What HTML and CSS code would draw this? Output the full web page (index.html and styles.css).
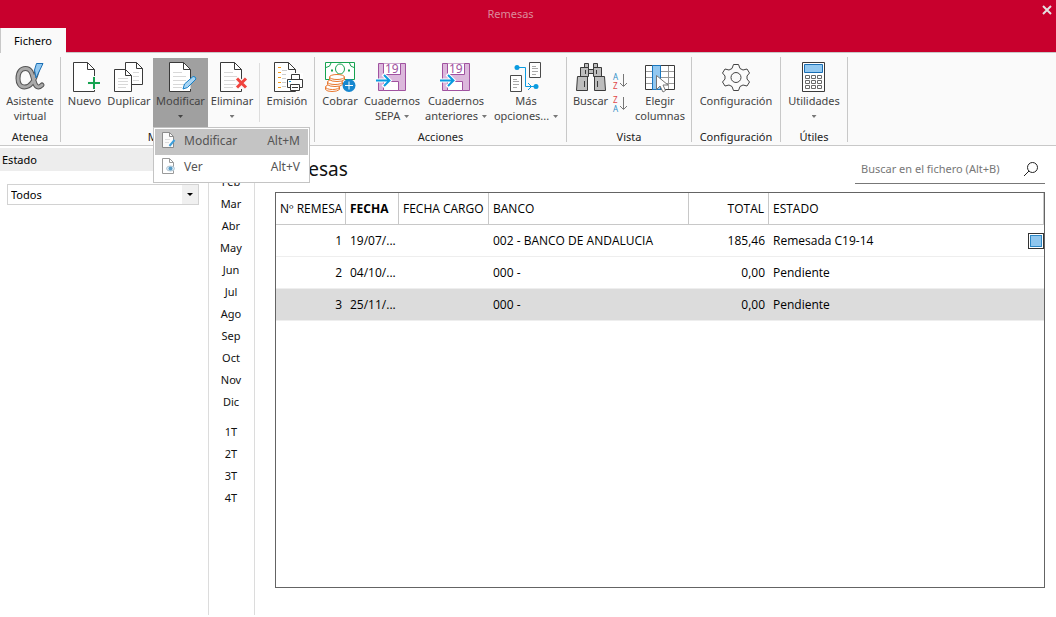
FILE: index.html
```html
<!DOCTYPE html>
<html lang="es">
<head>
<meta charset="utf-8">
<title>Remesas</title>
<link rel="stylesheet" href="styles.css">
</head>
<body>
<svg class="defs" aria-hidden="true">
  <defs>
    <g id="page">
      <path d="M4.500 1.500H18.500L25.500 8.500V30.500H4.500Z" fill="#fff"/>
      <path d="M25.500 21V8.500L18.500 1.500H4.500V30.500H25.500V28" fill="none" stroke="#3a3a3a"/>
      <path d="M18.500 1.500V8.500H25.500" fill="none" stroke="#3a3a3a"/>
    </g>
    <g id="lines"><path d="M8 11.500H17M8 15.500H21M8 19.500H21M8 23.500H21M8 26.500H17" stroke="#d8d8d8"/></g>
    <g id="book">
      <path d="M2.500 2.500H29.500V29.500H2.500Z" fill="#dcb8dc" stroke="#a052a0"/>
      <path d="M7.500 2.500V13.500H24.500V2.500" fill="#fff" stroke="#a052a0"/>
      <text x="9" y="12" font-size="12" class="glyph" fill="#a052a0">19</text>
      <path d="M7.500 20.500H22.500V29.500H7.500Z" fill="#fff" stroke="#a052a0"/>
      <path d="M0 19.500H14M7 13L13.500 19.500L7 26" fill="none" stroke="#fff" stroke-width="4"/>
      <path d="M0 19.500H13M8 14L13.500 19.500L8 25" fill="none" stroke="#0a9be0" stroke-width="2"/>
    </g>
  </defs>
</svg>
<div class="app">
  <header class="titlebar">
    <h1 class="window-title">Remesas</h1>
    <button class="close" aria-label="Cerrar"><svg width="10" height="10" viewBox="0 0 10 10"><path d="M1 1L9 9M9 1L1 9" stroke="#e4e0e2" stroke-width="2"/></svg></button>
    <button class="tab">Fichero</button>
  </header>

  <div class="ribbon">
    <section class="group g-atenea">
      <div class="tools">
        <button class="tool w-58">
          <svg width="32" height="32" viewBox="0 0 32 32"><g fill="none" stroke-linecap="round"><path d="M23 10C21 18 17.500 26 10.500 26C6 26 4 22 4 17.500C4 11 7 7.500 11.500 7.500C18 7.500 18.500 15 20 20C21.500 25.500 24 28 28 24" stroke="#555" stroke-width="5"/><path d="M23 10C21 18 17.500 26 10.500 26C6 26 4 22 4 17.500C4 11 7 7.500 11.500 7.500C18 7.500 18.500 15 20 20C21.500 25.500 24 28 28 24" stroke="#aaa" stroke-width="3"/></g><path d="M22.500 2.500H29L22 17L20.500 9Z" fill="#92c8f0" stroke="#1a6fb5"/></svg>
          <span>Asistente<br>virtual</span>
        </button>
      </div>
      <h2>Atenea</h2>
    </section>

    <section class="group g-mant">
      <div class="tools">
        <button class="tool w-43">
          <svg width="32" height="32" viewBox="0 0 32 32"><use href="#page"/><path d="M25.500 15V29M18.500 22H32" stroke="#fafafa" stroke-width="4"/><path d="M25 16V28M19 22H31" stroke="#16a350" stroke-width="2"/></svg>
          <span>Nuevo</span>
        </button>
        <button class="tool w-46">
          <svg width="32" height="32" viewBox="0 0 32 32"><path d="M12.500 1.500H23.500L29.500 7.500V23.500H12.500Z" fill="#fff" stroke="#3a3a3a"/><path d="M23.500 1.500V7.500H29.500" fill="none" stroke="#3a3a3a"/><path d="M20 11.500H26M20 15.500H26M20 19.500H26" stroke="#d8d8d8"/><path d="M1.500 8.500H12.500L18.500 14.500V30.500H1.500Z" fill="#fff" stroke="#3a3a3a"/><path d="M12.500 8.500V14.500H18.500" fill="none" stroke="#3a3a3a"/><path d="M5 17.500H15M5 20.500H15M5 23.500H15M5 26.500H13" stroke="#d8d8d8"/></svg>
          <span>Duplicar</span>
        </button>
        <div class="dropdown">
          <button class="tool w-55 active" aria-haspopup="menu" aria-expanded="true">
            <svg width="32" height="32" viewBox="0 0 32 32"><use href="#page"/><use href="#lines"/><path d="M18 28L19.500 23L28 15.500Q30.500 15 31 18L22.500 26.500Z" fill="#a8d4f3" stroke="#1580c8"/></svg>
            <span>Modificar</span><i class="caret"></i>
          </button>
          <div class="menu" role="menu">
            <button class="item selected" role="menuitem">
              <svg width="16" height="16" viewBox="0 0 16 16"><path d="M1.500.500H8.500L12.500 4.500V15.500H1.500Z" fill="#fafafa" stroke="#8b8b8b"/><path d="M8.500.500V4.500H12.500" fill="none" stroke="#8b8b8b"/><path d="M4 7.500H9M4 10.500H8" stroke="#ddd"/><path d="M8.500 14L13.500 8" stroke="#3c9fdb" stroke-width="2"/></svg>
              <span>Modificar</span><kbd>Alt+M</kbd>
            </button>
            <button class="item" role="menuitem">
              <svg width="16" height="16" viewBox="0 0 16 16"><path d="M1.500.500H8.500L12.500 4.500V15.500H1.500Z" fill="#fff" stroke="#9a9a9a"/><path d="M8.500.500V4.500H12.500" fill="none" stroke="#9a9a9a"/><ellipse cx="9.500" cy="10.500" rx="4" ry="2.500" fill="#dcebf5" stroke="#b4c6d2"/><circle cx="9.500" cy="10.500" r="2" fill="#5a9dc8"/></svg>
              <span>Ver</span><kbd>Alt+V</kbd>
            </button>
          </div>
        </div>
        <button class="tool w-48">
          <svg width="32" height="32" viewBox="0 0 32 32"><use href="#page"/><use href="#lines"/><path d="M20 17L30 27M30 17L20 27" stroke="#fafafa" stroke-width="5"/><path d="M21 17.500L30 26.500M30 17.500L21 26.500" stroke="#f0443e" stroke-width="3"/></svg>
          <span>Eliminar</span><i class="caret"></i>
        </button>
        <div class="divider"></div>
        <button class="tool w-50">
          <svg width="32" height="32" viewBox="0 0 32 32"><path d="M3.500 1.500H17.500L24.500 8.500V30.500H3.500Z" fill="#fff" stroke="#3a3a3a"/><path d="M17.500 1.500V8.500H24.500" fill="none" stroke="#3a3a3a"/><path d="M11 9.500H16M11 13.500H18M11 17.500H16M11 21.500H15M11 25.500H15" stroke="#ccc"/><path d="M7 6.500H10M7 11.500H10M7 16.500H10M7 21.500H10M7 26.500H10" stroke="#f39a1c"/><path d="M15 12H32V30H15Z" fill="#fff"/><path d="M20.500 18V13.500H28.500V18M19 26.500H16.500V18.500H31.500V26.500H29M19.500 23.500H28.500V29.500H19.500ZM21 26.500H27" fill="none" stroke="#3a3a3a"/><path d="M18 20.500H20" stroke="#0a9be0"/></svg>
          <span>Emisión</span>
        </button>
      </div>
      <h2>Mantenimiento</h2>
    </section>

    <section class="group g-acc">
      <div class="tools">
        <button class="tool w-46">
          <svg width="32" height="32" viewBox="0 0 32 32"><path d="M1.500 1.500H30.500V18.500H1.500Z" fill="#fff" stroke="#16a350"/><path d="M2 6.500Q6.500 6 7 2M25.500 2Q26 6 30 6.500" fill="none" stroke="#16a350"/><ellipse cx="16" cy="8" rx="4.500" ry="5" fill="none" stroke="#16a350"/><path d="M7 9.500H9M24 9.500H26" stroke="#16a350" stroke-width="2"/><g fill="#fff" stroke="#e8762d"><path d="M1.500 26V28.500Q3 30.500 8 30.500T15.500 28.500V26"/><ellipse cx="8.500" cy="26" rx="7" ry="2.500"/><path d="M3.500 21V23.500Q5 25.500 11 25.500T18.500 23.500V21"/><ellipse cx="11" cy="21" rx="7.500" ry="2.500"/><path d="M5.500 16V18.500Q7 20.500 13 20.500T20.500 18.500V16"/><ellipse cx="13" cy="16" rx="7.500" ry="2.500"/></g><circle cx="25" cy="24.500" r="6.500" fill="#1787cf"/><path d="M25 20.500V28.500M21 24.500H29" stroke="#fff"/></svg>
          <span>Cobrar</span>
        </button>
        <button class="tool w-58"><svg width="32" height="32" viewBox="0 0 32 32"><use href="#book"/></svg><span>Cuadernos<br>SEPA <i class="caret inline"></i></span></button>
        <button class="tool w-70"><svg width="32" height="32" viewBox="0 0 32 32"><use href="#book"/></svg><span>Cuadernos<br>anteriores <i class="caret inline"></i></span></button>
        <button class="tool w-70">
          <svg width="32" height="32" viewBox="0 0 32 32"><g fill="#fff" stroke="#4a4a4a"><path d="M19.500 1.500H30.500V16.500H19.500ZM.500 14.500H11.500V30.500H.500Z"/></g><path d="M22 5.500H26M22 7.500H28M22 10.500H28M22 13.500H26M3 18.500H7M3 20.500H9M3 23.500H9M3 26.500H7" stroke="#aaa"/><circle cx="7" cy="6.500" r="2.500" fill="#0a9be0"/><circle cx="26" cy="25.500" r="2.500" fill="#0a9be0"/><path d="M7 6.500H15.500V25.500H25M18 22L21.500 25.500L18 29" fill="none" stroke="#0a9be0"/></svg>
          <span>Más<br>opciones... <i class="caret inline"></i></span>
        </button>
      </div>
      <h2>Acciones</h2>
    </section>

    <section class="group g-vista">
      <div class="tools">
        <button class="tool w-43">
          <svg width="32" height="32" viewBox="0 0 32 32"><g fill="#bdbdbd" stroke="#3a3a3a"><path d="M9.500 2.500H13.500V6.500H9.500ZM18.500 2.500H22.500V6.500H18.500ZM5.500 6.500H13.500V15.500H5.500ZM18.500 6.500H26.500V15.500H18.500ZM2.500 15.500H12.500V29.500H1.500ZM19.500 15.500H29.500L30.500 29.500H19.500ZM13.500 8.500H18.500V12.500H13.500Z"/><path d="M9.500 20V26M22.500 20V26M10.500 9V13M21.500 9V13"/></g></svg>
          <span>Buscar</span>
        </button>
        <div class="sorts">
          <button class="sort" aria-label="Orden ascendente"><svg width="16" height="20" viewBox="0 0 16 20"><text x="1" y="9" font-size="8" class="glyph" fill="#2f8fc8">A</text><text x="1" y="18" font-size="8" class="glyph" fill="#e04848">Z</text><path d="M11.500 3V15M8 12L11.500 15.500L15 12" fill="none" stroke="#777"/></svg></button>
          <button class="sort" aria-label="Orden descendente"><svg width="16" height="20" viewBox="0 0 16 20"><text x="1" y="9" font-size="8" class="glyph" fill="#e04848">Z</text><text x="1" y="18" font-size="8" class="glyph" fill="#2f8fc8">A</text><path d="M11.500 3V15M8 12L11.500 15.500L15 12" fill="none" stroke="#777"/></svg></button>
        </div>
        <button class="tool w-58">
          <svg width="32" height="32" viewBox="0 0 32 32"><path d="M1.500 4.500H30.500V28.500H1.500Z" fill="#fff" stroke="#3a3a3a"/><path d="M2 10.500H30M2 16.500H30M2 22.500H30M24.500 5V28" stroke="#999"/><path d="M8.500 4.500H16.500V28.500H8.500Z" fill="#92c8f0" stroke="#1a78c0"/><path d="M12.500 14.500V28.500L16 25L19 31L21.500 29.500L19 24H24Z" fill="#fff" stroke="#777"/></svg>
          <span>Elegir<br>columnas</span>
        </button>
      </div>
      <h2>Vista</h2>
    </section>

    <section class="group g-conf">
      <div class="tools">
        <button class="tool w-82">
          <svg width="32" height="32" viewBox="0 0 32 32"><path d="M13.500 3.500H18.500L20 7.500L23 9L27 8L29.500 12L27 15V18L29.500 21L27 25L23 24L20 25.500L18.500 29.500H13.500L12 25.500L9 24L5 25L2.500 21L5 18V15L2.500 12L5 8L9 9L12 7.500Z" fill="none" stroke="#444" stroke-linejoin="round"/><circle cx="16" cy="16.500" r="5" fill="none" stroke="#444"/></svg>
          <span>Configuración</span>
        </button>
      </div>
      <h2>Configuración</h2>
    </section>

    <section class="group g-util">
      <div class="tools">
        <button class="tool w-58">
          <svg width="32" height="32" viewBox="0 0 32 32"><path d="M4.500 1.500H26.500V30.500H4.500Z" fill="#fff" stroke="#3a3a3a"/><path d="M6.500 3.500H24.500V11.500H6.500Z" fill="#92c8f0" stroke="#1a6fb5"/><path d="M7.500 14.500H11.500V17.500H7.500ZM13.500 14.500H17.500V17.500H13.500ZM19.500 14.500H23.500V17.500H19.500ZM7.500 19.500H11.500V22.500H7.500ZM13.500 19.500H17.500V22.500H13.500ZM19.500 19.500H23.500V22.500H19.500ZM7.500 24.500H11.500V27.500H7.500ZM13.500 24.500H17.500V27.500H13.500ZM19.500 24.500H23.500V27.500H19.500Z" fill="none" stroke="#6a6a6a"/></svg>
          <span>Utilidades</span><i class="caret"></i>
        </button>
      </div>
      <h2>Útiles</h2>
    </section>
  </div>

  <div class="workspace">
    <aside class="filters">
      <label class="filter-title" for="estado">Estado</label>
      <div class="select-box">
        <select id="estado"><option>Todos</option></select>
        <span class="select-arrow"><i class="caret dark"></i></span>
      </div>
    </aside>
    <nav class="months" aria-label="Periodo">
      <button>Ene</button><button>Feb</button><button>Mar</button><button>Abr</button><button>May</button><button>Jun</button><button>Jul</button><button>Ago</button><button>Sep</button><button>Oct</button><button>Nov</button><button>Dic</button>
      <button class="quarter">1T</button><button>2T</button><button>3T</button><button>4T</button>
    </nav>
    <main class="main">
      <div class="main-head">
        <h2 class="title">Remesas</h2>
        <div class="search">
          <input type="text" aria-label="Buscar en el fichero" placeholder="Buscar en el fichero (Alt+B)">
          <button aria-label="Buscar"><svg width="16" height="16" viewBox="0 0 16 16"><circle cx="9.500" cy="6.500" r="5" fill="none" stroke="#222"/><path d="M6 10L1 15" stroke="#222"/></svg></button>
        </div>
      </div>
      <div class="grid">
        <table>
          <colgroup><col class="c-num"><col class="c-date"><col class="c-charge"><col class="c-bank"><col class="c-total"><col></colgroup>
          <thead><tr><th class="num">Nº REMESA</th><th class="sorted">FECHA</th><th>FECHA CARGO</th><th>BANCO</th><th class="num">TOTAL</th><th>ESTADO</th></tr></thead>
          <tbody>
            <tr><td class="num">1</td><td>19/07/...</td><td></td><td>002 - BANCO DE ANDALUCIA</td><td class="num">185,46</td><td><div class="state">Remesada C19-14<span class="mark"></span></div></td></tr>
            <tr><td class="num">2</td><td>04/10/...</td><td></td><td>000 -</td><td class="num">0,00</td><td>Pendiente</td></tr>
            <tr class="current"><td class="num">3</td><td>25/11/...</td><td></td><td>000 -</td><td class="num">0,00</td><td>Pendiente</td></tr>
          </tbody>
        </table>
      </div>
    </main>
  </div>
</div>
</body>
</html>
```
FILE: styles.css
```css
* { box-sizing: border-box; }
body { margin: 0; background: #fff; color: #111; font: 11px/15px "Noto Sans", "Open Sans", sans-serif; }
button, input, select { font: inherit; color: inherit; border: 0; border-radius: 0; background: none; padding: 0; margin: 0; }
h1, h2 { margin: 0; font-weight: 400; font-size: 11px; }
.defs { position: absolute; width: 0; height: 0; }
.app { display: flex; flex-direction: column; min-height: 100vh; padding-bottom: 2px; }

.titlebar { display: grid; grid-template-columns: 66px 1fr 66px; grid-template-rows: 28px 24px; background: #c8002d; }
.window-title { grid-column: 2; text-align: center; line-height: 28px; color: #dc8b9b; padding-right: 35px; }
.close { grid-column: 3; justify-self: end; align-self: start; display: flex; padding: 5px 4px; }
.tab { grid-column: 1; grid-row: 2; background: #fafafa; border-left: 1px solid #c8c8c8; color: #000; margin-bottom: -1px; padding-right: 1px; z-index: 1; }

.ribbon { display: flex; background: #fafafa; border-top: 1px solid #c8c8c8; border-bottom: 1px solid #c8c8c8; padding: 4px 0 3px; color: #444; }
.group { display: flex; flex-direction: column; border-right: 1px solid #c8c8c8; height: 85px; }
.group h2 { text-align: center; line-height: 15px; margin-top: 2px; color: #222; }
.tools { display: flex; padding: 1px 0 0 2px; }
.g-atenea { width: 61px; }
.g-atenea .tools { padding-left: 1px; }
.g-mant { width: 254px; }
.g-acc { width: 252px; }
.g-vista { width: 125px; }
.g-conf { width: 89px; }
.g-conf .tools { padding-left: 3px; }
.g-util { width: 67px; }
.g-util .tools { padding-left: 4px; }
.tool { display: flex; flex-direction: column; align-items: center; height: 69px; padding-top: 3px; white-space: nowrap; }
.tool svg { flex: none; }
.w-43 { width: 43px; }
.w-46 { width: 46px; }
.w-48 { width: 48px; }
.w-50 { width: 50px; }
.w-55 { width: 55px; }
.w-58 { width: 58px; }
.w-70 { width: 70px; }
.w-82 { width: 82px; }
.active { background: #a0a0a0; }
.caret { display: block; width: 5px; height: 3px; margin-top: 7px; background: #777; clip-path: polygon(0 0, 100% 0, 50% 100%); }
.active .caret { background: #444; }
.caret.inline { display: inline-block; margin: 0 0 2px 1px; }
.caret.dark { width: 6px; height: 3px; margin: 0; background: #000; }
.divider { width: 1px; height: 59px; margin: 5px 2px 0 3px; background: #ddd; }
.glyph { font-family: "Noto Sans", sans-serif; }
.sorts { display: flex; flex-direction: column; gap: 3px; padding-top: 13px; }
.sort { display: flex; }
.sorts + .tool { margin-left: 3px; }

.dropdown { position: relative; margin-left: 1px; }
.menu { position: absolute; left: 0; top: 69px; width: 157px; padding: 1px; background: #fff; border: 1px solid #c4c4c4; z-index: 5; font-size: 12px; }
.item { display: flex; align-items: center; width: 100%; height: 26px; padding: 0 8px 4px 6px; gap: 7px; color: #555; }
.item.selected { background: #c4c4c4; }
.item kbd { font: inherit; margin-left: auto; }

.workspace { display: flex; flex: 1; }
.filters { flex: none; width: 209px; border-right: 1px solid #dcdcdc; padding-top: 2px; color: #000; }
.filter-title { display: block; background: #ededed; line-height: 23px; padding-left: 2px; }
.select-box { display: flex; margin: 13px 9px 0 7px; border: 1px solid #d2d2d2; height: 21px; }
.select-box select { flex: 1; appearance: none; padding-left: 3px; color: #000; }
.select-arrow { display: flex; align-items: center; justify-content: center; width: 16px; background: #f0f0f0; }
.months { flex: none; width: 46px; border-right: 1px solid #dcdcdc; display: flex; flex-direction: column; padding: 2px 1px 0 0; }
.months button { height: 22px; flex: none; }
.months .quarter { margin-top: 8px; }
.main { flex: 1; display: flex; flex-direction: column; padding: 0 11px 27px 13px; min-width: 0; }
.main-head { display: flex; justify-content: space-between; align-items: flex-start; height: 46px; padding-top: 8px; }
.title { font-size: 19px; line-height: 30px; color: #111; }
.search { display: flex; align-items: center; width: 190px; height: 30px; border-bottom: 1px solid #777; padding: 0 6px; }
.search input { flex: 1; min-width: 0; outline: 0; }
.search input::placeholder { color: #777; opacity: 1; }
.search button { display: flex; }
.grid { flex: 1; margin-left: 7px; border: 1px solid #646464; color: #000; }
table { width: 100%; border-collapse: separate; border-spacing: 0; table-layout: fixed; font-family: "Open Sans", "Noto Sans", sans-serif; font-size: 12px; }
.c-num { width: 70px; }
.c-date { width: 53px; }
.c-charge { width: 90px; }
.c-bank { width: 200px; }
.c-total { width: 80px; }
th, td { height: 32px; padding: 0 4px; text-align: left; font-weight: 400; white-space: nowrap; border-bottom: 1px solid #eee; }
th { border-bottom-color: #c8c8c8; border-right: 1px solid #c8c8c8; }
th.sorted { font-weight: 700; }
td.num, th.num { text-align: right; }
.current td { background: #dcdcdc; }
.state { display: flex; justify-content: space-between; align-items: center; margin-right: -4px; }
.mark { width: 16px; height: 16px; border: 1px solid #333; background: #8fc6ee; box-shadow: inset 0 0 0 1px #fff, inset 0 0 0 2px #2c87c5; }
```
